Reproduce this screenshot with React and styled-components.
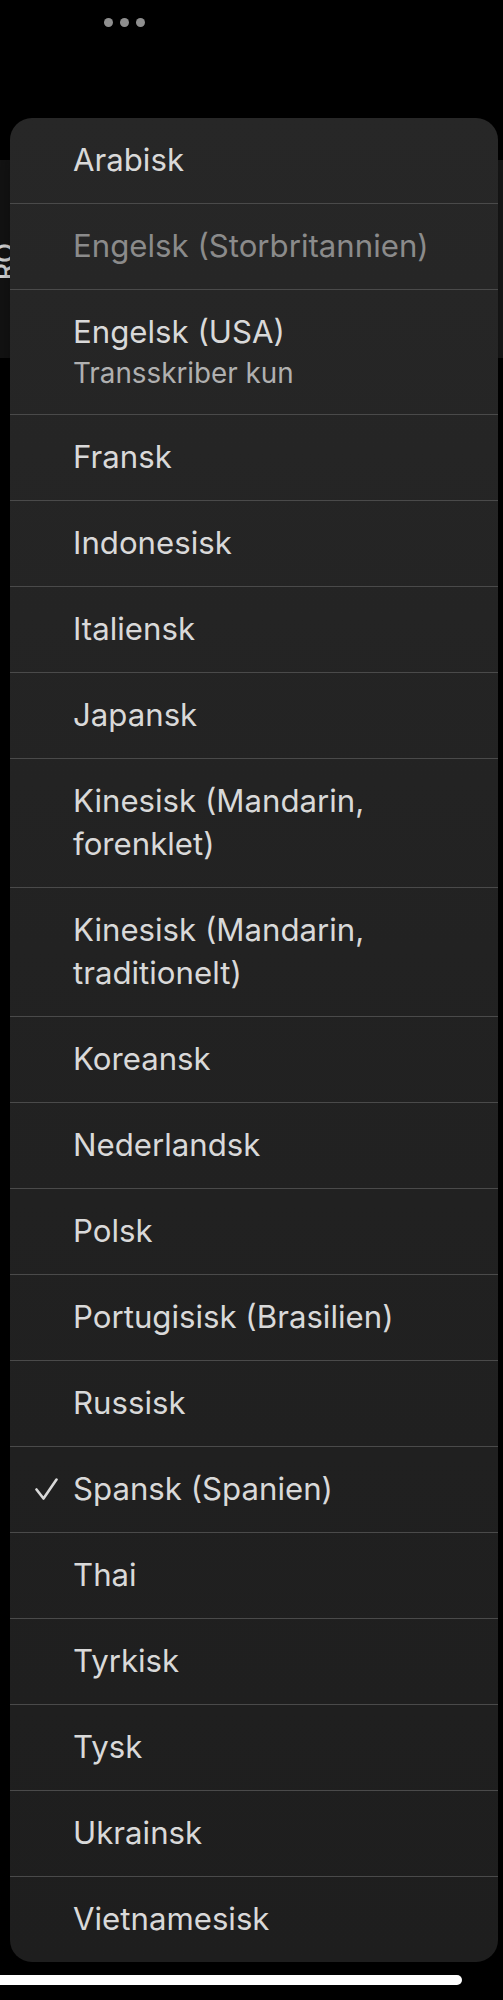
import React from 'react';
import styled, {createGlobalStyle} from "styled-components";

const GlobalStyle = createGlobalStyle`
  html, body {
    margin: 0;
    padding: 0;
    background: #000;
  }
  body {
    font-family: Inter, "Noto Sans", "Liberation Sans", sans-serif;
    -webkit-font-smoothing: antialiased;
  }
`

const Screen = styled.div`
  position: relative;
  width: 503px;
  height: 2000px;
  overflow: hidden;
  background: #000;
`
const TopBar = styled.div`
  display: flex;
  gap: 7px;
  height: 46px;
  padding: 18px 0 0 104px;
  box-sizing: border-box;
`
const Dot = styled.span`
  width: 9px;
  height: 9px;
  border-radius: 50%;
  background: #8f8f8f;
`
const BackPanel = styled.div`
  margin-top: 114px;
  height: 198px;
  background: linear-gradient(90deg, #161616, #1c1c1c);
  display: flex;
  align-items: center;
`
const SideLabel = styled.span`
  display: block;
  margin-left: -14px;
  margin-top: 4px;
  color: #fff;
  font-size: 26px;
  font-weight: 500;
  transform: rotate(-90deg);
`

const Menu = styled.div`
  position: absolute;
  top: 118px;
  left: 10px;
  width: 488px;
  border-radius: 22px;
  overflow: hidden;
  background: linear-gradient(180deg, #272727 0%, #222 45%, #1e1e1e 100%);
  box-shadow: 0 10px 40px rgba(0, 0, 0, 0.6);
`
const Row = styled.div`
  display: flex;
  align-items: center;
  padding: 21px 50px 21px 0;
  border-bottom: 1px solid #4a4a4a;

  &:last-child {
    border-bottom: none;
  }
`
const Gutter = styled.div`
  flex: 0 0 63px;
  display: flex;
  align-items: center;
  padding-left: 25px;
  box-sizing: border-box;
`
const Texts = styled.div`
  display: flex;
  flex-direction: column;
  min-width: 0;
`
const Label = styled.span`
  font-size: 31.2px;
  line-height: 43px;
  color: ${props => props.disabled ? '#8b8b8b' : '#d9d9d9'};
`
const SubLabel = styled.span`
  font-size: 27.8px;
  line-height: 39px;
  color: #b0b0b0;
`
const HomeBar = styled.div`
  position: absolute;
  top: 1975px;
  left: 0;
  width: 462px;
  height: 10px;
  border-radius: 0 5px 5px 0;
  background: #fff;
`

const Check = () => (
  <svg width="23" height="23" viewBox="0 0 23 23" fill="none">
    <path d="M1.5 11.5 L8.5 20.5 L21.5 1.5" stroke="#d8d8d8" strokeWidth="2.6" strokeLinecap="round" strokeLinejoin="round"/>
  </svg>
)

const languages = [
  {name: 'Arabisk'},
  {name: 'Engelsk (Storbritannien)', disabled: true},
  {name: 'Engelsk (USA)', sub: 'Transskriber kun'},
  {name: 'Fransk'},
  {name: 'Indonesisk'},
  {name: 'Italiensk'},
  {name: 'Japansk'},
  {name: 'Kinesisk (Mandarin, forenklet)'},
  {name: 'Kinesisk (Mandarin, traditionelt)'},
  {name: 'Koreansk'},
  {name: 'Nederlandsk'},
  {name: 'Polsk'},
  {name: 'Portugisisk (Brasilien)'},
  {name: 'Russisk'},
  {name: 'Spansk (Spanien)', selected: true},
  {name: 'Thai'},
  {name: 'Tyrkisk'},
  {name: 'Tysk'},
  {name: 'Ukrainsk'},
  {name: 'Vietnamesisk'},
]

const LanguageRow = ({lang}) => (
  <Row>
    <Gutter>{lang.selected && <Check />}</Gutter>
    <Texts>
      <Label disabled={lang.disabled}>{lang.name}</Label>
      {lang.sub && <SubLabel>{lang.sub}</SubLabel>}
    </Texts>
  </Row>
)

function App() {
  return (
    <Screen>
      <GlobalStyle />
      <TopBar>
        <Dot /><Dot /><Dot />
      </TopBar>
      <BackPanel>
        <SideLabel>RO</SideLabel>
      </BackPanel>
      <Menu>
        {languages.map(lang => (
          <LanguageRow key={lang.name} lang={lang} />
        ))}
      </Menu>
      <HomeBar />
    </Screen>
  );
}

export default App;
